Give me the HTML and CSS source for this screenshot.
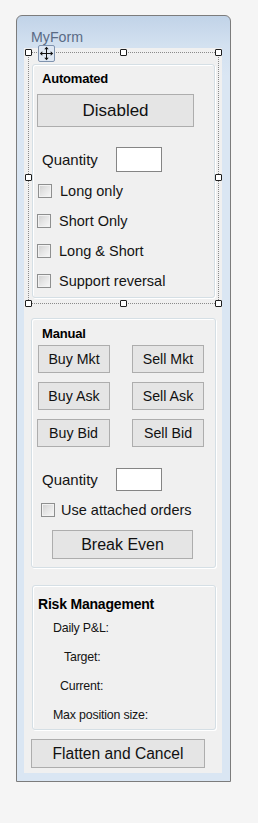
FILE: index.html
```html
<!DOCTYPE html>
<html>
<head>
<meta charset="utf-8">
<link rel="stylesheet" href="styles.css">
</head>
<body>
<div class="window">
  <div class="titlebar">MyForm</div>
  <div class="client">
    <div class="sel">
      <span class="handle h-tl"></span>
      <span class="handle h-tm"></span>
      <span class="handle h-tr"></span>
      <span class="handle h-ml"></span>
      <span class="handle h-mr"></span>
      <span class="handle h-bl"></span>
      <span class="handle h-bm"></span>
      <span class="handle h-br"></span>
      <span class="move">
        <svg width="17" height="17" viewBox="0 0 17 17">
          <rect x="0.5" y="0.5" width="16" height="16" rx="1.5" fill="#dfe8f3" stroke="#7f93ae"/>
          <path d="M8.5 3.5V13.5M3.5 8.5H13.5" stroke="#111" stroke-width="1"/>
          <path d="M8.5 1.8L6.3 4.3H10.7Z M8.5 15.2L6.3 12.7H10.7Z M1.8 8.5L4.3 6.3V10.7Z M15.2 8.5L12.7 6.3V10.7Z" fill="#111"/>
        </svg>
      </span>
      <div class="group group-auto">
        <div class="gtitle">Automated</div>
        <div class="btn btn-disabled">Disabled</div>
        <div class="qty qty-auto">
          <span class="qlabel">Quantity</span>
          <span class="tbox tbox-auto"></span>
        </div>
        <div class="checks">
          <div class="check check-first"><span class="cbox"></span><span class="clabel">Long only</span></div>
          <div class="check"><span class="cbox"></span><span class="clabel">Short Only</span></div>
          <div class="check"><span class="cbox"></span><span class="clabel">Long &amp; Short</span></div>
          <div class="check"><span class="cbox"></span><span class="clabel">Support reversal</span></div>
        </div>
      </div>
    </div>

    <div class="group group-manual">
      <div class="gtitle">Manual</div>
      <div class="grid">
        <div class="btn btn-small">Buy Mkt</div>
        <div class="btn btn-small">Sell Mkt</div>
        <div class="btn btn-small">Buy Ask</div>
        <div class="btn btn-small">Sell Ask</div>
        <div class="btn btn-small btn-nudge">Buy Bid</div>
        <div class="btn btn-small">Sell Bid</div>
      </div>
      <div class="qty qty-manual">
        <span class="qlabel">Quantity</span>
        <span class="tbox tbox-manual"></span>
      </div>
      <div class="check check-attached"><span class="cbox cbox-big"></span><span class="clabel clabel-attached">Use attached orders</span></div>
      <div class="btn btn-break">Break Even</div>
    </div>

    <div class="group group-risk">
      <div class="gtitle gtitle-risk">Risk Management</div>
      <div class="risk-row"><span class="rlabel r-daily">Daily P&amp;L:</span></div>
      <div class="risk-row"><span class="rlabel r-target">Target:</span></div>
      <div class="risk-row"><span class="rlabel r-current">Current:</span></div>
      <div class="risk-row"><span class="rlabel r-max">Max position size:</span></div>
    </div>

    <div class="btn btn-flatten">Flatten and Cancel</div>
  </div>
</div>
</body>
</html>
```

FILE: styles.css
```css
html, body {
  margin: 0;
  padding: 0;
  background: #f5f5f5;
}
body {
  font-family: "Liberation Sans", Arial, sans-serif;
  color: #141414;
  width: 258px;
  height: 823px;
  overflow: hidden;
}
.window {
  box-sizing: border-box;
  margin: 15px 0 0 16px;
  width: 215px;
  height: 767px;
  border: 1px solid #7c7c7c;
  border-radius: 6px 6px 0 0;
  background: linear-gradient(to bottom, #c1d3e8 0px, #d3e1f0 30px, #dae6f3 60px, #dae6f3 100%);
  padding: 0 8px 8px 7px;
  display: flex;
  flex-direction: column;
}
.titlebar {
  height: 32px;
  flex: none;
  box-sizing: border-box;
  padding: 13px 0 0 7px;
  font-size: 14.2px;
  line-height: 16px;
  color: #5a6b85;
}
.client {
  flex: 1;
  background: #f0f0f0;
  display: flex;
  flex-direction: column;
  align-items: flex-start;
}
.sel {
  position: relative;
  box-sizing: border-box;
  width: 191px;
  height: 252px;
  margin: 4px 0 0 4px;
  border: 1px dotted #8a8a8a;
  padding: 11px 3px 5px 3px;
}
.handle {
  position: absolute;
  width: 5px;
  height: 5px;
  border: 1px solid #1e1e1e;
  background: #fff;
  border-radius: 1px;
  z-index: 2;
}
.h-tl { left: -4px; top: -4px; }
.h-tm { left: calc(50% - 4px); top: -4px; }
.h-tr { right: -4px; top: -4px; }
.h-ml { left: -4px; top: calc(50% - 4px); }
.h-mr { right: -4px; top: calc(50% - 4px); }
.h-bl { left: -4px; bottom: -4px; }
.h-bm { left: calc(50% - 4px); bottom: -4px; }
.h-br { right: -4px; bottom: -4px; }
.move {
  position: absolute;
  left: 9px;
  top: -8px;
  width: 17px;
  height: 17px;
  z-index: 3;
}
.move svg { display: block; }

.group {
  box-sizing: border-box;
  border: 1px solid #d5dfe5;
  border-radius: 3px;
  box-shadow: inset 1px 1px 0 #fff, 1px 1px 0 #fff;
  display: flex;
  flex-direction: column;
  align-items: flex-start;
}
.gtitle {
  font-weight: bold;
  font-size: 13px;
  line-height: 16px;
  letter-spacing: -0.2px;
  color: #000;
}
.btn {
  box-sizing: border-box;
  border: 1px solid #adadad;
  background: #e5e5e5;
  display: flex;
  align-items: center;
  justify-content: center;
  color: #111;
  white-space: nowrap;
}

/* Automated */
.group-auto {
  width: 183px;
  height: 234px;
  padding: 6px 0 0 0;
}
.group-auto .gtitle { margin-left: 9px; }
.btn-disabled {
  width: 157px;
  height: 33px;
  margin: 7px 0 0 4px;
  font-size: 17px;
}
.qty {
  display: flex;
  align-items: center;
}
.qlabel {
  width: 74px;
  font-size: 15px;
  line-height: 18px;
  padding-top: 1px;
}
.tbox {
  box-sizing: border-box;
  width: 46px;
  background: #fff;
  border: 1px solid #858585;
}
.qty-auto { margin: 20px 0 0 9px; }
.tbox-auto { height: 25px; }
.checks {
  margin-top: 4px;
  display: flex;
  flex-direction: column;
}
.check {
  height: 30px;
  display: flex;
  align-items: center;
  margin-left: 4px;
}
.check-first { margin-left: 5px; }
.check-first .clabel { margin-left: 8px; }
.cbox {
  box-sizing: border-box;
  width: 14px;
  height: 14px;
  border: 1px solid #8e8f8f;
  background: linear-gradient(135deg, #cfcfcf 0%, #e6e6e6 50%, #f8f8f8 100%);
  box-shadow: inset 0 0 0 1px #f2f2f2;
  flex: none;
}
.clabel {
  margin-left: 8px;
  font-size: 14.5px;
  line-height: 17px;
  padding-top: 1px;
}

/* Manual */
.group-manual {
  width: 185px;
  height: 250px;
  margin: 14px 0 0 7px;
  padding: 7px 0 0 0;
}
.group-manual .gtitle { margin-left: 10px; }
.grid {
  margin: 3px 0 0 6px;
  display: grid;
  grid-template-columns: 72px 72px;
  grid-auto-rows: 28px;
  column-gap: 22px;
  row-gap: 9px;
}
.btn-small { font-size: 14.2px; }
.btn-nudge { margin-left: -1px; }
.qty-manual { margin: 21px 0 0 10px; }
.tbox-manual { height: 23px; }
.check-attached {
  height: 20px;
  margin: 9px 0 0 9px;
}
.clabel-attached { margin-left: 6px; }
.btn-break {
  width: 141px;
  height: 29px;
  margin: 10px 0 0 20px;
  font-size: 16px;
}

/* Risk */
.group-risk {
  width: 184px;
  height: 145px;
  margin: 17px 0 0 8px;
  padding: 10px 0 0 0;
}
.gtitle-risk {
  margin-left: 5px;
  font-size: 14px;
  line-height: 17px;
  margin-bottom: 1px;
}
.risk-row {
  height: 29px;
  display: flex;
  align-items: center;
  flex: none;
}
.rlabel {
  font-size: 12.4px;
  line-height: 15px;
  letter-spacing: -0.2px;
}
.r-daily { margin-left: 20px; }
.r-target { margin-left: 31px; }
.r-current { margin-left: 27px; }
.r-max { margin-left: 20px; }

.btn-flatten {
  width: 174px;
  height: 29px;
  margin: 9px 0 0 7px;
  font-size: 15.6px;
}
```
